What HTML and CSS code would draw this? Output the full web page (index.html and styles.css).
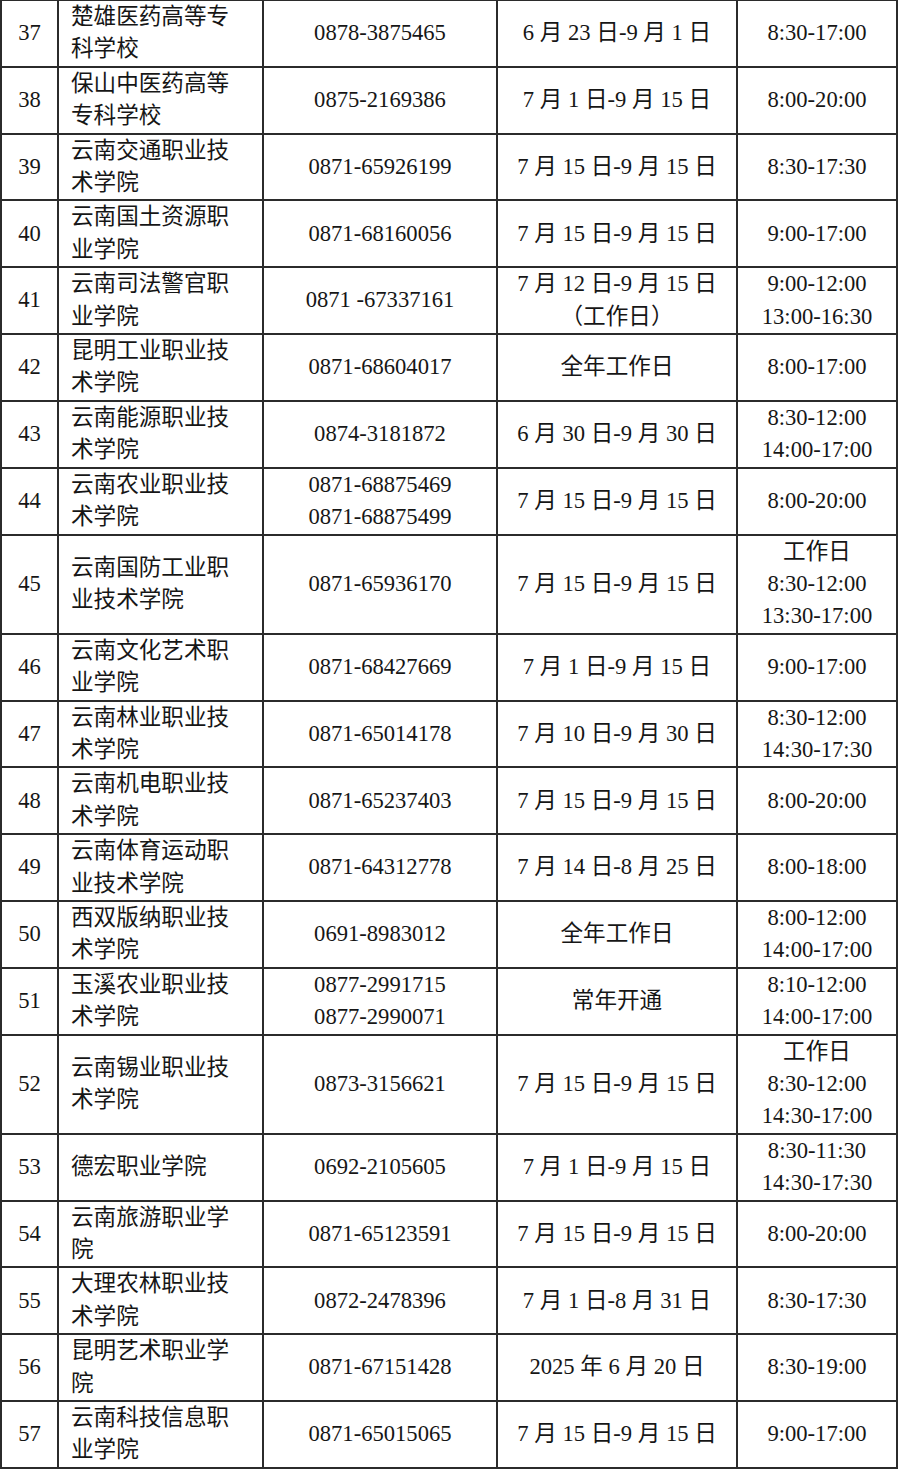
FILE: index.html
```html
<!DOCTYPE html>
<html lang="zh-CN">
<head>
<meta charset="utf-8">
<title>咨询电话</title>
<link rel="stylesheet" href="styles.css">
</head>
<body>
<table class="grid">
<colgroup>
<col class="c-no"><col class="c-name"><col class="c-tel"><col class="c-date"><col class="c-time">
</colgroup>
<tbody>
<tr><td class="no">37</td><td class="name">楚雄医药高等专科学校</td><td>0878-3875465</td><td>6 月 23 日-9 月 1 日</td><td>8:30-17:00</td></tr>
<tr><td class="no">38</td><td class="name">保山中医药高等专科学校</td><td>0875-2169386</td><td>7 月 1 日-9 月 15 日</td><td>8:00-20:00</td></tr>
<tr><td class="no">39</td><td class="name">云南交通职业技术学院</td><td>0871-65926199</td><td>7 月 15 日-9 月 15 日</td><td>8:30-17:30</td></tr>
<tr><td class="no">40</td><td class="name">云南国土资源职业学院</td><td>0871-68160056</td><td>7 月 15 日-9 月 15 日</td><td>9:00-17:00</td></tr>
<tr><td class="no">41</td><td class="name">云南司法警官职业学院</td><td>0871 -67337161</td><td>7 月 12 日-9 月 15 日<br>（工作日）</td><td>9:00-12:00<br>13:00-16:30</td></tr>
<tr><td class="no">42</td><td class="name">昆明工业职业技术学院</td><td>0871-68604017</td><td>全年工作日</td><td>8:00-17:00</td></tr>
<tr><td class="no">43</td><td class="name">云南能源职业技术学院</td><td>0874-3181872</td><td>6 月 30 日-9 月 30 日</td><td>8:30-12:00<br>14:00-17:00</td></tr>
<tr><td class="no">44</td><td class="name">云南农业职业技术学院</td><td>0871-68875469<br>0871-68875499</td><td>7 月 15 日-9 月 15 日</td><td>8:00-20:00</td></tr>
<tr><td class="no">45</td><td class="name">云南国防工业职业技术学院</td><td>0871-65936170</td><td>7 月 15 日-9 月 15 日</td><td>工作日<br>8:30-12:00<br>13:30-17:00</td></tr>
<tr><td class="no">46</td><td class="name">云南文化艺术职业学院</td><td>0871-68427669</td><td>7 月 1 日-9 月 15 日</td><td>9:00-17:00</td></tr>
<tr><td class="no">47</td><td class="name">云南林业职业技术学院</td><td>0871-65014178</td><td>7 月 10 日-9 月 30 日</td><td>8:30-12:00<br>14:30-17:30</td></tr>
<tr><td class="no">48</td><td class="name">云南机电职业技术学院</td><td>0871-65237403</td><td>7 月 15 日-9 月 15 日</td><td>8:00-20:00</td></tr>
<tr><td class="no">49</td><td class="name">云南体育运动职业技术学院</td><td>0871-64312778</td><td>7 月 14 日-8 月 25 日</td><td>8:00-18:00</td></tr>
<tr><td class="no">50</td><td class="name">西双版纳职业技术学院</td><td>0691-8983012</td><td>全年工作日</td><td>8:00-12:00<br>14:00-17:00</td></tr>
<tr><td class="no">51</td><td class="name">玉溪农业职业技术学院</td><td>0877-2991715<br>0877-2990071</td><td>常年开通</td><td>8:10-12:00<br>14:00-17:00</td></tr>
<tr><td class="no">52</td><td class="name">云南锡业职业技术学院</td><td>0873-3156621</td><td>7 月 15 日-9 月 15 日</td><td>工作日<br>8:30-12:00<br>14:30-17:00</td></tr>
<tr><td class="no">53</td><td class="name">德宏职业学院</td><td>0692-2105605</td><td>7 月 1 日-9 月 15 日</td><td>8:30-11:30<br>14:30-17:30</td></tr>
<tr><td class="no">54</td><td class="name">云南旅游职业学院</td><td>0871-65123591</td><td>7 月 15 日-9 月 15 日</td><td>8:00-20:00</td></tr>
<tr><td class="no">55</td><td class="name">大理农林职业技术学院</td><td>0872-2478396</td><td>7 月 1 日-8 月 31 日</td><td>8:30-17:30</td></tr>
<tr><td class="no">56</td><td class="name">昆明艺术职业学院</td><td>0871-67151428</td><td>2025 年 6 月 20 日</td><td>8:30-19:00</td></tr>
<tr><td class="no">57</td><td class="name">云南科技信息职业学院</td><td>0871-65015065</td><td>7 月 15 日-9 月 15 日</td><td>9:00-17:00</td></tr>
</tbody>
</table>
</body>
</html>
```

FILE: styles.css
```css
html, body {
  margin: 0;
  padding: 0;
  background: #fff;
}

body {
  font-family: "Liberation Serif", "Noto Sans CJK SC", serif;
  font-size: 22.6px;
  color: #161616;
}

.grid {
  border-collapse: collapse;
  table-layout: fixed;
  width: 898px;
  margin: -1px 0 0 0;
}

.c-no { width: 57px; }
.c-name { width: 205px; }
.c-tel { width: 234px; }
.c-date { width: 240px; }
.c-time { width: 160px; }

.grid td {
  border: 2px solid #2b2b2b;
  padding: 0 4px;
  line-height: 32.4px;
  text-align: center;
  vertical-align: middle;
  white-space: nowrap;
}

.grid td.name {
  text-align: left;
  padding: 0 26px 0 12px;
  white-space: normal;
  word-break: break-all;
}

.grid td.no {
  padding: 0;
}
```
